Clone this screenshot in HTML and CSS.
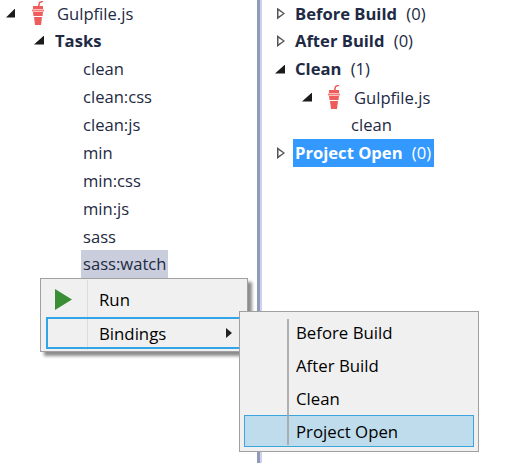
FILE: index.html
```html
<!DOCTYPE html>
<html lang="en">
<head>
  <meta charset="UTF-8">
  <title>Task Runner Explorer</title>
  <link rel="stylesheet" href="styles.css">
</head>
<body>
  <svg class="defs" width="0" height="0">
    <symbol id="gulp" viewBox="0 0 14 25">
      <path d="M7.5 6 8.5 1.5 12 0" fill="none" stroke="#ee5c5c" stroke-width="1.5"/>
      <path d="M2 5h10v3H2z" fill="#ee5c5c"/>
      <path d="M1 8.5h12v2H1z" fill="#f47c7a"/>
      <path d="M2 11h10l-.5 4h-9zM3 16h8l-1 8H4z" fill="#ee5c5c"/>
    </symbol>
  </svg>

  <div class="panes">
    <div class="pane left">
      <div class="row first level-0">
        <span class="tri open"></span>
        <svg class="cup"><use href="#gulp"/></svg>
        <span>Gulpfile.js</span>
      </div>
      <div class="row level-1"><span class="tri open"></span><b>Tasks</b></div>
      <div class="row task"><span class="label">clean</span></div>
      <div class="row task"><span class="label">clean:css</span></div>
      <div class="row task"><span class="label">clean:js</span></div>
      <div class="row task"><span class="label">min</span></div>
      <div class="row task"><span class="label">min:css</span></div>
      <div class="row task"><span class="label">min:js</span></div>
      <div class="row task"><span class="label">sass</span></div>
      <div class="row task"><span class="label picked">sass:watch</span></div>
    </div>
    <div class="splitter"></div>
    <div class="pane right">
      <div class="row first"><span class="tri closed"></span><span class="label"><b>Before Build</b> (0)</span></div>
      <div class="row"><span class="tri closed"></span><span class="label"><b>After Build</b> (0)</span></div>
      <div class="row"><span class="tri open"></span><span class="label"><b>Clean</b> (1)</span></div>
      <div class="row sub">
        <span class="tri open"></span>
        <svg class="cup"><use href="#gulp"/></svg>
        <span>Gulpfile.js</span>
      </div>
      <div class="row bound"><span class="label">clean</span></div>
      <div class="row"><span class="tri closed"></span><span class="label active"><b>Project Open</b> (0)</span></div>
    </div>
  </div>

  <div class="menu main-menu">
    <div class="item run">
      <svg class="play" width="17" height="21" viewBox="0 0 17 21"><path d="M0 0 17 10.5 0 21z" fill="#3a8f35"/></svg>
      <span>Run</span>
    </div>
    <div class="item hot">
      <span>Bindings</span>
      <span class="more"></span>
    </div>
  </div>

  <div class="menu sub-menu">
    <div class="item">Before Build</div>
    <div class="item">After Build</div>
    <div class="item">Clean</div>
    <div class="item current">Project Open</div>
  </div>
</body>
</html>
```

FILE: styles.css
```css
body {
  margin: 0;
  height: 463px;
  overflow: hidden;
  background-color: #fff;
  font-family: "Open Sans", sans-serif;
  font-size: 16.6px;
  color: #1e2a44;
  position: relative;
}

.defs {
  display: block;
  height: 0;
}

.panes {
  display: flex;
  height: 463px;
}

.pane.left {
  width: 257px;
}

.splitter {
  width: 3px;
  background-color: #8f9bb8;
  border-right: 2px solid #ccd3ea;
}

.pane.right {
  flex: 1;
}

.row {
  height: 28px;
  display: flex;
  align-items: center;
  white-space: nowrap;
}

.row b {
  font-weight: 700;
  margin-right: 5px;
}

.label {
  display: block;
  line-height: 28px;
  padding: 0 2px;
}

.tri {
  width: 9px;
  height: 9px;
  flex: none;
}

.tri.open {
  background: #1b1b1b;
  clip-path: polygon(100% 0, 100% 100%, 0 100%);
}

.tri.closed {
  width: 8px;
  height: 12px;
  margin: 0 1px;
  background: #555;
  clip-path: polygon(0 0, 100% 50%, 0 100%, 0 0, 1.5px 3px, 1.5px 9px, 6px 6px, 1.5px 3px);
}

.cup {
  width: 14px;
  height: 25px;
  flex: none;
}

/* left tree */
.left .first {
  height: 26px;
}

.left .level-0 {
  padding-left: 6px;
}

.left .level-0 .cup {
  margin: 0 12px 0 16px;
}

.left .level-1 {
  padding-left: 34px;
}

.left .level-1 .tri {
  width: 10px;
}

.left .level-1 b {
  margin-left: 11px;
}

.left .row:nth-child(3) {
  margin-top: 1px;
}

.left .task {
  padding-left: 81px;
}

.picked {
  margin-top: -2px;
  background-color: #c9cddc;
}

/* right tree */
.right .first {
  height: 27px;
}

.right .row {
  padding-left: 14px;
}

.right .row .label {
  margin-left: 7px;
}

.right .row > .tri.open {
  width: 10px;
  margin: 0 1px 0 -1px;
}

.right .row.sub {
  padding-left: 41px;
}

.right .row.sub .cup {
  margin: 0 13px 0 14px;
}

.right .row.bound {
  padding-left: 87px;
}

.right .row.bound .label {
  margin-left: 0;
}

.active {
  padding-right: 3px;
  background-color: #3399ff;
  color: #fff;
}

/* context menus sit on top of the tree */
.menu {
  position: absolute;
  box-sizing: border-box;
  background-color: #f0f0f0;
  border: 1px solid #a0a0a0;
  color: #000;
  font-size: 16.8px;
}

.main-menu {
  left: 40px;
  top: 278px;
  width: 208px;
  height: 74px;
  padding: 3px 5px;
  box-shadow: 4px 4px 3px rgba(0, 0, 0, 0.45);
}

.main-menu::before {
  content: "";
  position: absolute;
  left: 46px;
  top: 1px;
  bottom: 1px;
  width: 1px;
  background-color: #dcdcdc;
}

.main-menu .item {
  height: 33px;
  display: flex;
  align-items: center;
  padding-left: 53px;
  box-sizing: border-box;
  position: relative;
}

.main-menu .run {
  padding-top: 2px;
}

.main-menu .hot {
  height: 32px;
  border: 2px solid #30a5e8;
  justify-content: space-between;
  padding-left: 51px;
  padding-right: 8px;
  margin-top: 2px;
}

.play {
  position: absolute;
  left: 9px;
  top: 7px;
}

.more {
  border-left: 6px solid #222;
  border-top: 5px solid transparent;
  border-bottom: 5px solid transparent;
}

.sub-menu {
  left: 239px;
  top: 311px;
  width: 240px;
  height: 141px;
  padding: 5px 4px;
  z-index: 1;
}

.sub-menu::before {
  content: "";
  position: absolute;
  left: 47px;
  top: 7px;
  bottom: 6px;
  width: 2px;
  background-color: #a4a4a4;
  z-index: 1;
  opacity: 0.85;
}

.sub-menu .item {
  height: 33px;
  line-height: 32px;
  padding-left: 52px;
  box-sizing: border-box;
}

.sub-menu .current {
  height: 32px;
  margin-top: -1px;
  background-color: #bfdcec;
  border: 1px solid #3ba4dc;
  padding-left: 51px;
  line-height: 32px;
}
```
